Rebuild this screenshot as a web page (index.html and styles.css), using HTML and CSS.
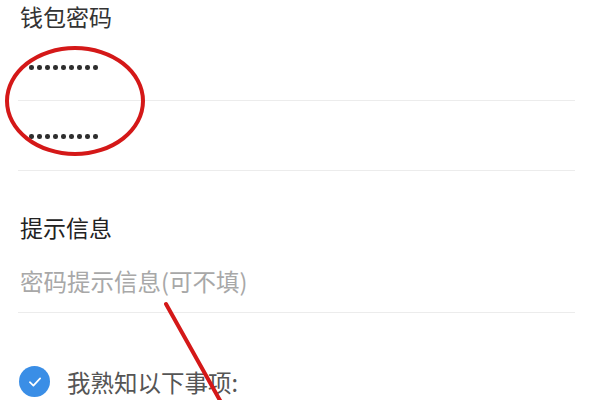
FILE: index.html
```html
<!DOCTYPE html>
<html lang="zh-CN">
<head>
  <meta charset="UTF-8" />
  <title>钱包密码</title>
  <link rel="stylesheet" href="styles.css">
</head>
<body>

  <!-- Password section -->
  <section class="group">
    <div class="title">钱包密码</div>
    <div class="field">
      <div class="dots">
        <i></i><i></i><i></i><i></i><i></i><i></i><i></i><i></i><i></i>
      </div>
    </div>
    <div class="field">
      <div class="dots">
        <i></i><i></i><i></i><i></i><i></i><i></i><i></i><i></i><i></i>
      </div>
    </div>
  </section>

  <!-- Hint section -->
  <section class="group hint">
    <div class="label">提示信息</div>
    <div class="placeholder">密码提示信息(可不填)</div>
  </section>

  <!-- Agreement -->
  <div class="agree">
    <span class="check">
      <svg width="16" height="16" viewBox="0 0 14 14">
        <path d="M2.5 7.2 L5.6 10.2 L11.5 3.8" fill="none" stroke="#fff" stroke-width="1.5" stroke-linecap="round" stroke-linejoin="round"/>
      </svg>
    </span>
    <span class="agree-text">我熟知以下事项:</span>
  </div>

  <!-- Red annotations -->
  <div class="ring"></div>
  <svg class="stroke" width="600" height="400" viewBox="0 0 600 400">
    <line x1="166" y1="304" x2="222" y2="404" stroke="#d41818" stroke-width="4" stroke-linecap="round"/>
  </svg>

</body>
</html>
```

FILE: styles.css
```css
body {
  margin: 0;
  background: #fff;
  font-family: "Noto Sans CJK SC", "Noto Sans", sans-serif;
  overflow: hidden;
}

.group {
  margin: 0 25px 0 18px;
}

.title {
  height: 30px;
  line-height: 30px;
  padding-top: 1px;
  padding-left: 2px;
  font-size: 23px;
  color: #333;
}

.field {
  height: 69px;
  border-bottom: 1px solid #ececec;
}

.dots {
  display: flex;
  gap: 3.5px;
  padding-top: 34px;
  padding-left: 11px;
}

.field + .field .dots {
  padding-top: 33px;
}

.dots i {
  width: 4.5px;
  height: 4.5px;
  border-radius: 50%;
  background: #2e2e2e;
}

.hint {
  padding-top: 41px;
  padding-bottom: 16px;
  border-bottom: 1px solid #ececec;
}

.label {
  line-height: 30px;
  font-size: 23px;
  color: #222;
  padding-left: 2px;
}

.placeholder {
  margin-top: 24px;
  line-height: 30px;
  font-size: 23.5px;
  color: #a8a8a8;
  padding-left: 2px;
}

.agree {
  display: flex;
  align-items: center;
  gap: 17px;
  margin: 53px 0 0 19px;
}

.check {
  width: 31px;
  height: 31px;
  border-radius: 50%;
  background: #3a8ee6;
  display: flex;
  align-items: center;
  justify-content: center;
}

.agree-text {
  font-size: 23.5px;
  line-height: 30px;
  color: #555;
}

.ring {
  position: absolute;
  left: 5px;
  top: 46px;
  width: 140px;
  height: 110px;
  box-sizing: border-box;
  border: 4px solid #d41818;
  border-radius: 50%;
}

.stroke {
  position: absolute;
  left: 0;
  top: 0;
}
```
